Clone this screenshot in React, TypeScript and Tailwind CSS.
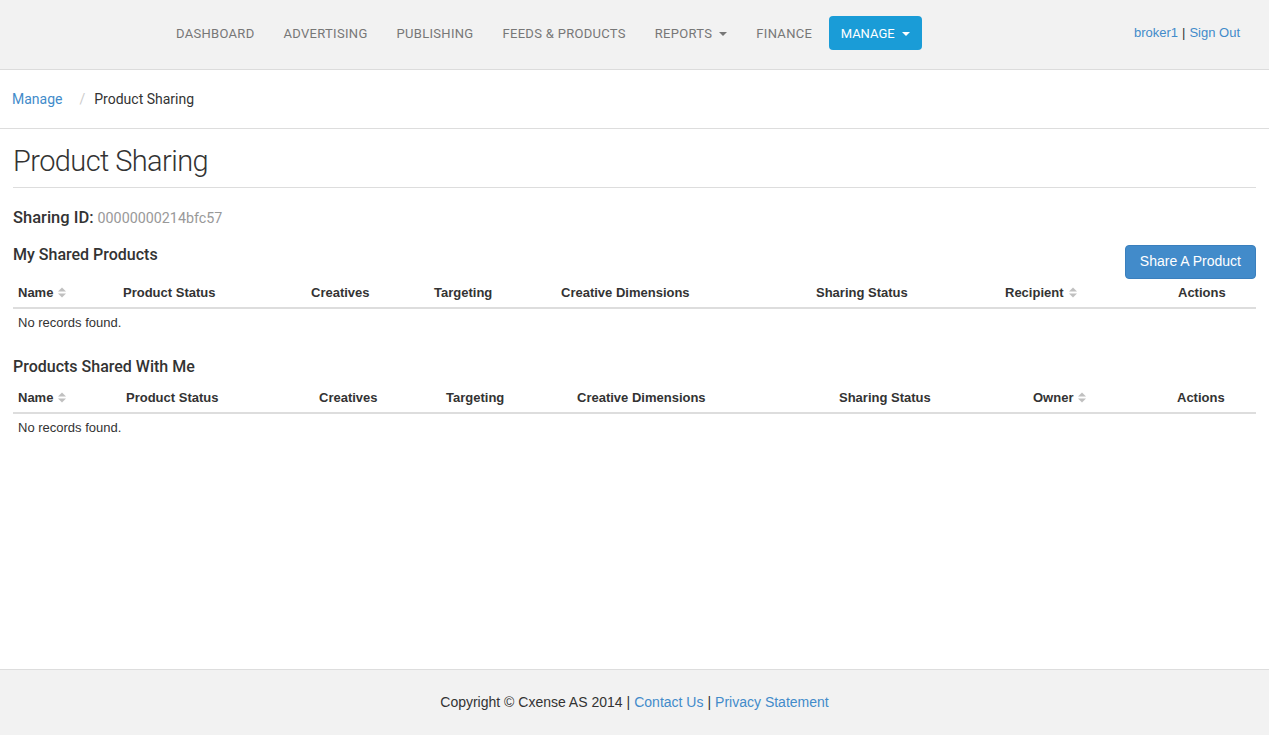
import React from "react";

const SortIcon = () => (
  <svg width="8" height="11" viewBox="0 0 8 11" className="inline-block ml-[5px] -mt-[2px]">
    <path d="M0 4.5 L4 0.5 L8 4.5 Z" fill="#c0c0c0" />
    <path d="M0 6.5 L4 10.5 L8 6.5 Z" fill="#c0c0c0" />
  </svg>
);

const Caret = ({ color }: { color: string }) => (
  <span
    className="inline-block ml-[7px] align-middle w-0 h-0 border-l-[4px] border-r-[4px] border-t-[4px] border-l-transparent border-r-transparent"
    style={{ borderTopColor: color }}
  />
);

type Col = { label: string; sort?: boolean };

const DataTable = ({ cols, template }: { cols: Col[]; template: string }) => (
  <div className="font-['Liberation_Sans',Arial,sans-serif] text-[13px] text-[#333]">
    <div className={`grid ${template} border-b-2 border-[#dddddd] h-[30px] items-center font-bold`}>
      {cols.map((c) => (
        <div key={c.label} className="px-[5px] whitespace-nowrap">
          {c.label}
          {c.sort && <SortIcon />}
        </div>
      ))}
    </div>
    <div className="px-[5px] h-[27px] flex items-center">No records found.</div>
  </div>
);

export default function App() {
  return (
    <div className="min-h-[735px] flex flex-col bg-white font-['Roboto',sans-serif] text-[#333]">
      {/* navbar */}
      <div className="h-[70px] bg-[#f2f2f2] border-b border-[#dcdcdc] flex items-center pb-[3px]">
        <div className="flex items-center pl-[161.5px] text-[13px] tracking-[0.3px] text-[#777] uppercase">
          <a className="px-[14.5px] pt-[1px]">Dashboard</a>
          <a className="px-[14.5px] pt-[1px]">Advertising</a>
          <a className="px-[14.5px] pt-[1px]">Publishing</a>
          <a className="px-[14.5px] pt-[1px]">Feeds &amp; Products</a>
          <a className="px-[14.5px] pt-[1px]">
            Reports
            <Caret color="#777" />
          </a>
          <a className="px-[14.5px] pt-[1px]">Finance</a>
          <a className="ml-[2px] px-[12px] pt-[1px] h-[34px] flex items-center rounded-[4px] bg-[#1a9cd7] text-white tracking-normal">
            Manage
            <Caret color="#ffffff" />
          </a>
        </div>
        <div className="ml-auto pr-[29px] font-['Liberation_Sans',Arial,sans-serif] text-[13px]">
          <a className="text-[#428bca]">broker1</a>
          <span className="text-[#333] mx-[4px]">|</span>
          <a className="text-[#428bca]">Sign Out</a>
        </div>
      </div>

      {/* breadcrumb */}
      <div className="h-[59px] border-b border-[#dddddd] flex items-center px-[12px] text-[14px]">
        <a className="text-[#428bca]">Manage</a>
        <span className="text-[#cccccc] ml-[17px] mr-[9px]">/</span>
        <span className="text-[#333]">Product Sharing</span>
      </div>

      {/* content */}
      <div className="flex-1 px-[13px] pb-[20px]">
        <h1 className="text-[29px] tracking-[-0.6px] font-light leading-none pt-[18px] pb-[11px] border-b border-[#dddddd]">
          Product Sharing
        </h1>

        <div className="mt-[18px] flex items-baseline">
          <span className="text-[16.5px] font-medium">Sharing ID:</span>
          <span className="ml-[4px] text-[14.3px] text-[#999]">00000000214bfc57</span>
        </div>

        <div className="mt-[12px] flex items-start justify-between">
          <h3 className="text-[16px] font-medium">My Shared Products</h3>
          <button className="h-[34px] px-[14px] rounded-[4px] bg-[#428bca] border border-[#3a7fbd] text-white text-[14px] font-['Liberation_Sans',Arial,sans-serif] mt-[2px]">
            Share A Product
          </button>
        </div>

        <DataTable
          template="grid-cols-[105px_188px_123px_127px_255px_189px_173px_1fr]"
          cols={[
            { label: "Name", sort: true },
            { label: "Product Status" },
            { label: "Creatives" },
            { label: "Targeting" },
            { label: "Creative Dimensions" },
            { label: "Sharing Status" },
            { label: "Recipient", sort: true },
            { label: "Actions" },
          ]}
        />

        <h3 className="text-[16px] font-medium mt-[19px] mb-[5px]">Products Shared With Me</h3>
        <DataTable
          template="grid-cols-[108px_193px_127px_131px_262px_194px_144px_1fr]"
          cols={[
            { label: "Name", sort: true },
            { label: "Product Status" },
            { label: "Creatives" },
            { label: "Targeting" },
            { label: "Creative Dimensions" },
            { label: "Sharing Status" },
            { label: "Owner", sort: true },
            { label: "Actions" },
          ]}
        />
      </div>

      {/* footer */}
      <div className="h-[66px] bg-[#f2f2f2] border-t border-[#dddddd] flex items-center justify-center font-['Liberation_Sans',Arial,sans-serif] text-[14px] text-[#333]">
        <span>Copyright © Cxense AS 2014</span>
        <span className="mx-[4px]">|</span>
        <a className="text-[#428bca]">Contact Us</a>
        <span className="mx-[4px]">|</span>
        <a className="text-[#428bca]">Privacy Statement</a>
      </div>
    </div>
  );
}
